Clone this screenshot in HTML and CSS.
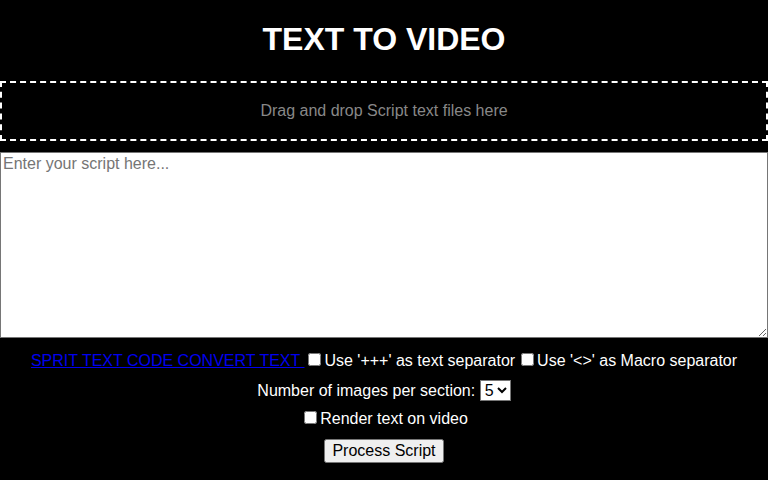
FILE: index.html
```html
<!DOCTYPE html>
<html lang="en">
<head>
<meta charset="utf-8">
<title>Text to Video</title>
<link rel="stylesheet" href="styles.css">
</head>
<body>
<h1 class="title">TEXT TO VIDEO</h1>
<div class="dropzone">Drag and drop Script text files here</div>
<textarea class="script" placeholder="Enter your script here..."></textarea>
<div class="controls">
  <div class="row row-first"><a class="link" href="#">SPRIT TEXT CODE CONVERT TEXT </a><input type="checkbox" id="sep1"><label for="sep1">Use '+++' as text separator</label><input type="checkbox" id="sep2" class="cb-gap"><label for="sep2">Use '&lt;&gt;' as Macro separator</label></div>
  <div class="row row-select"><label for="num">Number of images per section: </label><select id="num" class="select"><option>1</option><option>2</option><option>3</option><option>4</option><option selected>5</option></select></div>
  <div class="row row-render"><input type="checkbox" id="render"><label for="render">Render text on video</label></div>
  <div class="row row-btn"><button class="btn" type="button">Process Script</button></div>
</div>
</body>
</html>
```
FILE: styles.css
```css
html, body {
  background: #000;
}
body {
  margin: 0;
  color: #fff;
  font-family: "Liberation Sans", Arial, sans-serif;
  font-size: 16px;
}
.title {
  font-size: 32px;
  font-weight: bold;
  text-align: center;
  margin: 21px 0 0;
  line-height: 37px;
}
.dropzone {
  margin-top: 23px;
  border: 2px dashed #fff;
  padding: 19px 20px;
  line-height: 18px;
  text-align: center;
  color: #888;
  box-sizing: border-box;
  height: 60px;
}
.script {
  display: block;
  box-sizing: border-box;
  width: 100%;
  height: 186px;
  margin: 11px 0 0;
  padding: 2px;
  border: 1px solid #767676;
  background: #fff;
  color: #000;
  font-family: "Liberation Sans", Arial, sans-serif;
  font-size: 16px;
}
.script::placeholder {
  color: #757575;
}
.controls {
  text-align: center;
  padding-top: 2px;
}
.row {
  margin: 10px 0 0;
  line-height: 18px;
  height: 18px;
}
.row-select {
  margin-top: 12px;
  height: 20px;
}
.row-render {
  margin-top: 8px;
}
.row-btn {
  margin-top: 13px;
  height: 24px;
}
.cb-gap {
  margin-left: 6px;
}
.link {
  color: #0000ee;
  text-decoration: underline;
}
.select {
  font-family: "Liberation Sans", Arial, sans-serif;
  font-size: 16px;
  background: #fff;
  color: #000;
}
.btn {
  font-family: "Liberation Sans", Arial, sans-serif;
  font-size: 16px;
}
```
